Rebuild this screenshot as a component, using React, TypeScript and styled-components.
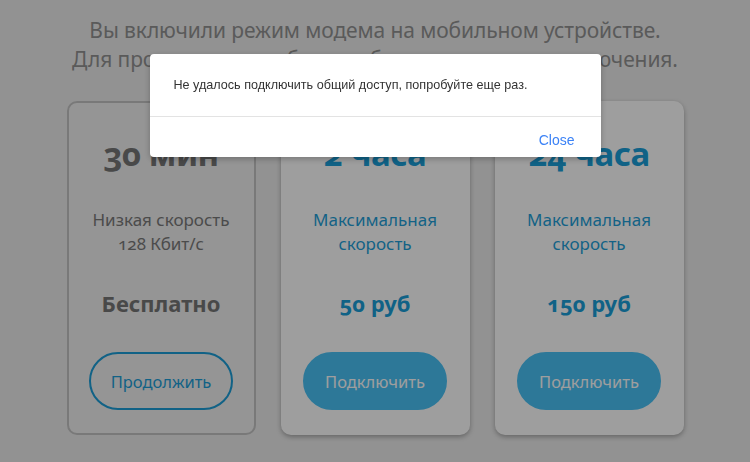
import styled, { createGlobalStyle } from "styled-components";

const plans = [
  { id: "free", time: "30 мин", speed: ["Низкая скорость", "128 Кбит/с"], price: "Бесплатно", action: "Продолжить", free: true },
  { id: "2h", time: "2 часа", speed: ["Максимальная", "скорость"], price: "50 руб", action: "Подключить", free: false },
  { id: "24h", time: "24 часа", speed: ["Максимальная", "скорость"], price: "150 руб", action: "Подключить", free: false },
];

const App = () => {
  return (
    <>
      <GlobalStyle />
      <Page>
        <Heading>
          Вы включили режим модема на мобильном устройстве.
          <br />
          Для продолжения работы выберите вариант подключения.
        </Heading>
        <CardRow>
          {plans.map((plan) => (
            <Card key={plan.id} $free={plan.free}>
              <Time $free={plan.free}>{plan.time}</Time>
              <Speed $free={plan.free}>
                {plan.speed[0]}
                <br />
                {plan.speed[1]}
              </Speed>
              <Price $free={plan.free}>{plan.price}</Price>
              <ActionButton $free={plan.free}>{plan.action}</ActionButton>
            </Card>
          ))}
        </CardRow>
      </Page>
      <Backdrop>
        <Dialog>
          <DialogBody>Не удалось подключить общий доступ, попробуйте еще раз.</DialogBody>
          <DialogFooter>
            <CloseButton>Close</CloseButton>
          </DialogFooter>
        </Dialog>
      </Backdrop>
    </>
  );
};

const GlobalStyle = createGlobalStyle`
  html, body {
    margin: 0;
    padding: 0;
  }
  body {
    background: #ececec;
    font-family: "Noto Sans", "Open Sans", sans-serif;
  }
`;

const Page = styled.main`
  width: 750px;
  height: 462px;
  overflow: hidden;
  background: #ececec;
  display: flex;
  flex-direction: column;
  align-items: center;
  padding-top: 16px;
  box-sizing: border-box;
`;

const Heading = styled.h1`
  margin: 0;
  font-size: 21px;
  line-height: 29px;
  font-weight: 400;
  color: #929292;
  text-align: center;
  letter-spacing: -0.1px;
`;

const CardRow = styled.div`
  display: flex;
  gap: 25px;
  margin-top: 27px;
`;

const Card = styled.section<{ $free: boolean }>`
  width: 189px;
  height: 334px;
  box-sizing: border-box;
  border-radius: 10px;
  display: flex;
  flex-direction: column;
  align-items: center;
  padding-top: 29px;
  font-variant-numeric: oldstyle-nums;
  background: ${({ $free }) => ($free ? "#f0f0f0" : "#ffffff")};
  border: 2px solid ${({ $free }) => ($free ? "#c4c4c4" : "transparent")};
  box-shadow: ${({ $free }) => ($free ? "none" : "0 2px 5px rgba(0, 0, 0, 0.3)")};
`;

const Time = styled.div<{ $free: boolean }>`
  font-size: 33px;
  line-height: 44px;
  font-weight: 700;
  letter-spacing: -0.5px;
  color: ${({ $free }) => ($free ? "#777777" : "#1a9fd9")};
`;

const Speed = styled.div<{ $free: boolean }>`
  margin-top: 32px;
  font-size: 17px;
  line-height: 24px;
  text-align: center;
  color: ${({ $free }) => ($free ? "#7a7a7a" : "#1f9fd8")};
`;

const Price = styled.div<{ $free: boolean }>`
  margin-top: 32px;
  font-size: 22px;
  line-height: 30px;
  font-weight: 700;
  color: ${({ $free }) => ($free ? "#777777" : "#1a9fd9")};
`;

const ActionButton = styled.button<{ $free: boolean }>`
  margin-top: 34px;
  width: 144px;
  height: 58px;
  border-radius: 29px;
  box-sizing: border-box;
  font-family: inherit;
  font-size: 16.5px;
  cursor: pointer;
  border: 2px solid;
  background: ${({ $free }) => ($free ? "transparent" : "#4ac2f6")};
  color: ${({ $free }) => ($free ? "#1c9ed8" : "#ffffff")};
  border-color: ${({ $free }) => ($free ? "#1c9ed8" : "#4ac2f6")};
`;

const Backdrop = styled.div`
  position: fixed;
  inset: 0;
  background: rgba(0, 0, 0, 0.38);
  display: flex;
  justify-content: center;
  align-items: flex-start;
  padding-top: 54px;
`;

const Dialog = styled.div`
  width: 451px;
  background: #ffffff;
  border-radius: 4px;
  box-shadow: 0 2px 6px rgba(0, 0, 0, 0.25);
  font-family: "Liberation Sans", Arial, sans-serif;
`;

const DialogBody = styled.div`
  height: 62px;
  box-sizing: border-box;
  padding: 23px 24px 0;
  font-size: 12.6px;
  line-height: 16px;
  color: #333333;
`;

const DialogFooter = styled.div`
  height: 41px;
  box-sizing: border-box;
  border-top: 1px solid #e3e3e3;
  display: flex;
  justify-content: flex-end;
  align-items: center;
  padding: 5px 26px 0;
`;

const CloseButton = styled.button`
  border: none;
  background: none;
  padding: 0;
  font-family: inherit;
  font-size: 14px;
  color: #3b82f6;
  cursor: pointer;
`;

export default App;
